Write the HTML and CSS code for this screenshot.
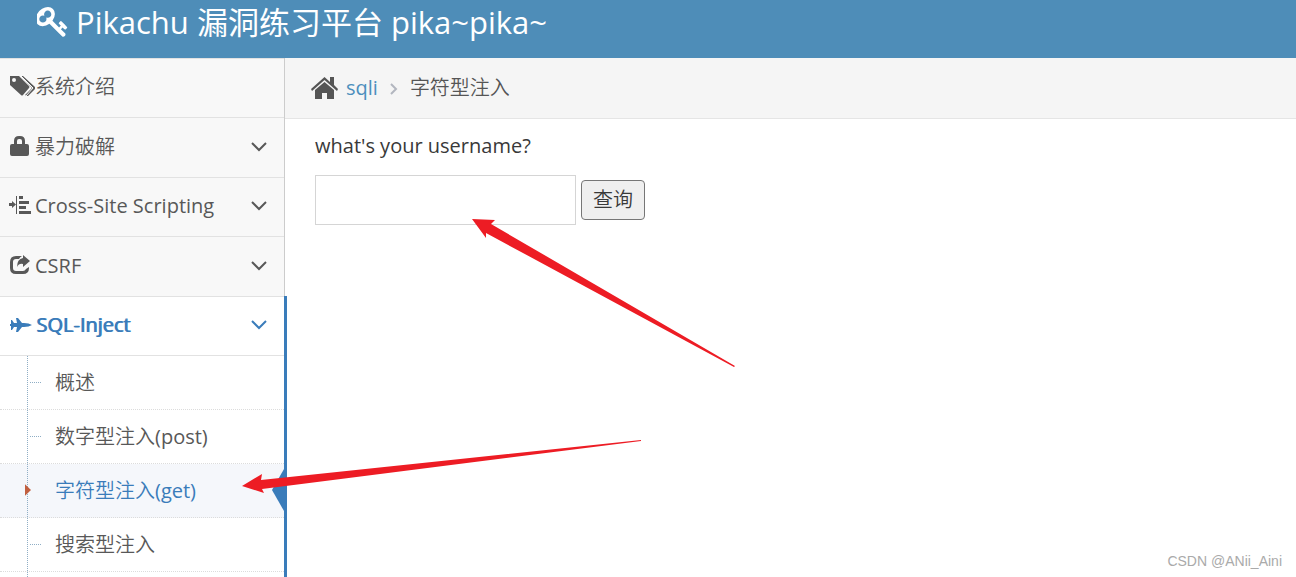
FILE: index.html
```html
<!DOCTYPE html>
<html lang="zh">
<head>
    <meta charset="utf-8">
    <title>Pikachu 漏洞练习平台</title>
    <link rel="stylesheet" href="styles.css">
</head>
<body>
    <header class="navbar">
        <svg class="key" viewBox="110 128 1573 1600"><path d="M832 512q0-80-56-136t-136-56-136 56-56 136q0 42 19 83-41-19-83-19-80 0-136 56t-56 136 56 136 136 56 136-56 56-136q0-42-19-83 41 19 83 19 80 0 136-56t56-136zm851 704q0 17-49 66t-66 49q-9 0-28.500-16t-36.500-33-38.500-40-24.500-26l-96 96 220 220q28 28 28 68 0 42-39 81t-81 39q-40 0-68-28l-671-671q-176 131-365 131-163 0-265.500-102.500t-102.500-265.500q0-160 95-313t248-248 313-95q163 0 265.500 102.500t102.500 265.500q0 189-131 365l355 355 96-96q-3-3-26-24.500t-40-38.500-33-36.500-16-28.500q0-17 49-66t66-49q13 0 23 10 6 6 46 44.500t82 79.500 86.500 86 73 78 28.500 41z"/></svg>
        <h1>Pikachu 漏洞练习平台 pika~pika~</h1>
    </header>

    <div class="container">
        <nav class="sidebar">
            <ul class="nav-list">
                <li>
                    <a href="#">
                        <svg class="icon icon-wide" viewBox="0 0 25 20"><path fill-rule="evenodd" d="M0 0h9l10 10q1 1 0 2l-6 7q-1 1-2 0L0 9zM4 2a2 2 0 1 0 0 4 2 2 0 0 0 0-4z"/><path d="M11 0h2l12 11q1 1 0 2l-7 7h-1l-2-1 7-7z"/><path class="gap" d="M11 0l12 12-7 8"/></svg>
                        <span>系统介绍</span>
                    </a>
                </li>
                <li>
                    <a href="#">
                        <svg class="icon" viewBox="0 0 22 20"><path fill-rule="evenodd" d="M4 8V5q0-5 5-5h1q5 0 5 5v3h2q2 0 2 2v8q0 2-2 2H2q-2 0-2-2v-8q0-2 2-2zM7 8h5V5q0-2-2-2H9Q7 3 7 5z"/></svg>
                        <span>暴力破解</span>
                        <svg class="arrow" viewBox="0 0 16 10"><path d="M1 1l7 7 7-7"/></svg>
                    </a>
                </li>
                <li>
                    <a href="#">
                        <svg class="icon icon-indent" viewBox="0 0 22 20"><path d="M0 8h3V6l4 3.500L3 13v-2H0zM7 1h1v18H7zM10 1h4v3h-4zM10 6h10v3H10zM10 11h7v3h-7zM10 16h12v3H10z"/></svg>
                        <span>Cross-Site Scripting</span>
                        <svg class="arrow" viewBox="0 0 16 10"><path d="M1 1l7 7 7-7"/></svg>
                    </a>
                </li>
                <li>
                    <a href="#">
                        <svg class="icon" viewBox="0 0 22 20"><path d="M12 1H6Q0 1 0 7v6q0 6 6 6h7q6 0 6-6v-1l-3 2q-1 2-3 2H6q-3 0-3-3V7q0-3 3-3h3q1-2 3-3zM13 0l7 6-7 6V9q-4-1-6 3 0-8 6-9z"/></svg>
                        <span>CSRF</span>
                        <svg class="arrow" viewBox="0 0 16 10"><path d="M1 1l7 7 7-7"/></svg>
                    </a>
                </li>
                <li class="open">
                    <a href="#">
                        <svg class="icon" viewBox="0 0 22 20"><path d="M22 10q-3 2-8 2h-2l-4 5H6l1-5H4l-2 3H1v-4H0V9h1V5h1l2 3h3L6 3h2l4 5h2q5 0 8 2z"/></svg>
                        <span>SQL-Inject</span>
                        <svg class="arrow" viewBox="0 0 16 10"><path d="M1 1l7 7 7-7"/></svg>
                    </a>
                    <ul class="submenu">
                        <li><a href="#">概述</a></li>
                        <li><a href="#">数字型注入(post)</a></li>
                        <li class="active"><a href="#">字符型注入(get)</a></li>
                        <li><a href="#">搜索型注入</a></li>
                    </ul>
                </li>
            </ul>
        </nav>

        <main class="content">
            <div class="breadcrumbs">
                <svg class="home" viewBox="0 0 27 22"><path d="M13.500 0L19 5V0h4v8l4 4-1 2L13.500 3 1 14l-1-2z"/><path d="M13.500 5L23 13v9h-7v-6h-5v6H4v-9z"/></svg>
                <a href="#">sqli</a>
                <svg class="sep" viewBox="0 0 8 12"><path d="M1 1l5 5-5 5"/></svg>
                <span>字符型注入</span>
            </div>
            <form class="query">
                <label for="name">what's your username?</label>
                <div class="row">
                    <input type="text" id="name" name="name">
                    <button type="button">查询</button>
                </div>
            </form>
        </main>
    </div>

    <!-- red pointers over the page -->
    <svg class="marks" width="750" height="500">
        <path d="M472 219l23 1-4 4 244 142-1 1-248-134v5z"/>
        <path d="M242 486l20-12-1 6 380-40v1L262 489l2 4z"/>
    </svg>
    <div class="watermark">CSDN @ANii_Aini</div>
</body>
</html>
```

FILE: styles.css
```css
* { box-sizing: border-box; }
body {
    margin: 0;
    min-height: 100vh;
    display: flex;
    flex-direction: column;
    position: relative;
    background: #fff;
    color: #393939;
    font-family: "Open Sans", "Noto Sans CJK SC DemiLight", "Noto Sans CJK SC Light", "Noto Sans CJK SC", sans-serif;
    font-size: 20px;
    font-weight: 400;
    line-height: 28px;
}
a { color: #4c8fbd; text-decoration: none; }
ul { list-style: none; margin: 0; padding: 0; }
svg { flex: none; fill: currentColor; }

.navbar {
    display: flex;
    align-items: center;
    gap: 8px;
    height: 58px;
    padding: 0 37px 15px;
    background: #4e8db8;
    color: #fff;
}
.navbar h1 {
    margin: 0;
    font-family: "Open Sans", "Noto Sans CJK SC", sans-serif;
    font-size: 31px;
    font-weight: 400;
    line-height: 44px;
    white-space: nowrap;
}
.key { width: 31px; height: 30px; }

.container { flex: 1; display: flex; }

.sidebar {
    display: flex;
    flex: none;
    width: 285px;
    background: #f8f8f8;
    border-right: 1px solid #ccc;
}
.nav-list { flex: 1; display: flex; flex-direction: column; }
.nav-list > li { border-top: 1px solid #e2e2e2; }
.nav-list > li > a {
    display: flex;
    align-items: center;
    height: 59px;
    padding: 0 17px 2px 10px;
    color: #585858;
}
.nav-list > li:nth-child(odd) > a { height: 58px; }
.icon { width: 22px; height: 20px; margin: 0 3px 2px 0; }
.icon-wide { width: 25px; margin-right: 0; }
.icon-indent { margin-left: -1px; margin-right: 4px; }
.gap { fill: none; stroke: #f8f8f8; stroke-width: 1; }
.arrow { width: 16px; height: 10px; margin-left: auto; }
.arrow path, .sep path { fill: none; stroke: currentColor; stroke-width: 2; }

.nav-list > .open {
    flex: 1;
    display: flex;
    flex-direction: column;
    position: relative;
    background: #fff;
}
.nav-list > .open > a { color: #3a7cba; }
.open > a span { text-shadow: 1px 0 0 currentColor; }
.open .icon { margin: 0 4px 0 0; }
/* blue bar on the edge of the open group */
.open::after {
    content: "";
    position: absolute;
    top: -1px;
    bottom: 0;
    right: -3px;
    width: 3px;
    background: #3a7cba;
}

.submenu { flex: 1; position: relative; border-top: 1px solid #e2e2e2; }
.submenu::before {
    content: "";
    position: absolute;
    z-index: 1;
    top: 0;
    bottom: 0;
    left: 27px;
    border-left: 1px dotted #8faec5;
}
.submenu li { position: relative; border-bottom: 1px dotted #dcdcdc; }
.submenu li::before {
    content: "";
    position: absolute;
    top: 26px;
    left: 30px;
    width: 11px;
    border-top: 1px dotted #8faec5;
}
.submenu a { display: block; padding: 13px 0 12px 55px; color: #585858; }
.submenu .active { background: #f5f7fb; }
.submenu .active a { color: #3a7cba; }
.submenu .active::before {
    z-index: 2;
    top: 15px;
    left: 25px;
    width: 6px;
    height: 22px;
    border: 0;
    background: #c15f3f;
    clip-path: polygon(0 24%, 100% 50%, 0 76%);
}
.submenu .active::after {
    content: "";
    position: absolute;
    top: 5px;
    right: 0;
    width: 12px;
    height: 42px;
    background: #3a7cba;
    clip-path: polygon(100% 0, 0 50%, 100% 100%);
}

.content { flex: 1; min-width: 0; }
.breadcrumbs {
    display: flex;
    align-items: center;
    height: 61px;
    padding: 0 26px;
    background: #f5f5f5;
    border-bottom: 1px solid #e5e5e5;
    color: #555;
}
.home { width: 27px; height: 22px; margin: 0 8px 1px 0; }
.sep { width: 8px; height: 12px; margin: 2px 12px 0; color: #b2b6bf; }

.query { padding: 13px 30px; }
.row { display: flex; align-items: center; gap: 5px; margin-top: 15px; }
.row input {
    width: 261px;
    height: 50px;
    padding: 0 8px;
    border: 1px solid #d5d5d5;
    font: inherit;
}
.row button {
    height: 40px;
    padding: 0 11px;
    border: 1px solid #767676;
    border-radius: 4px;
    background: #efefef;
    color: #393939;
    font: inherit;
}

.marks { position: absolute; top: 0; left: 0; fill: #ed1c24; pointer-events: none; }
.watermark {
    position: absolute;
    right: 14px;
    bottom: 6px;
    color: #aaa;
    font-family: "Liberation Sans", Arial, sans-serif;
    font-size: 14px;
    line-height: 20px;
}
```
